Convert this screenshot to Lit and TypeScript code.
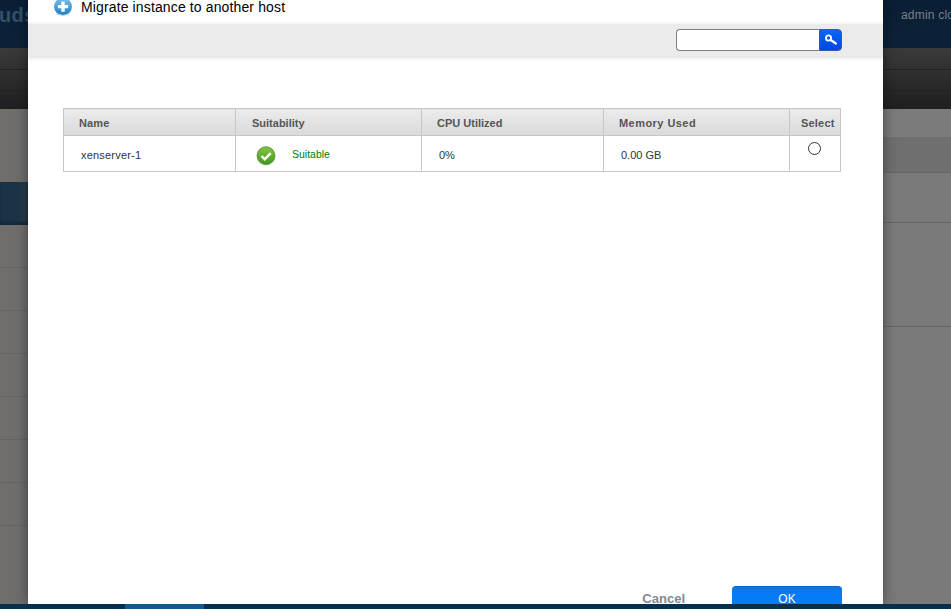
import { LitElement, html, css } from "lit";
import { customElement } from "lit/decorators.js";

@customElement("app-root")
export class AppRoot extends LitElement {
  static styles = css`
    :host { display: block; width: 951px; height: 609px; position: relative; overflow: hidden; font-family: "Liberation Sans", Arial, sans-serif; background: #757472; }
    .page { height: 609px; display: flex; flex-direction: column; }
    .top { height: 48px; flex: none; background: linear-gradient(#0a1f35, #0b2238); display: flex; justify-content: space-between; color: #7d7f82; overflow: hidden; }
    .brand { font-size: 20px; font-weight: bold; color: #34506a; margin-left: -1px; line-height: 30px; letter-spacing: .4px; }
    .user { font-size: 12px; line-height: 31px; white-space: nowrap; width: 50px; overflow: hidden; letter-spacing: .2px; }
    .nav { height: 61px; flex: none; background: linear-gradient(#3a3a3a, #1f1f1f); display: flex; flex-direction: column; padding-top: 1px; box-sizing: border-box; }
    .nav div { height: 20px; border-bottom: 1px solid #232323; }
    .content { flex: 1; display: flex; justify-content: space-between; }
    .side { width: 28px; background: #6f6e6b; padding-top: 73px; }
    .active { height: 43px; background: linear-gradient(90deg, #1b3346 0 60%, #2c4150); box-shadow: inset 0 -3px 3px #12283a; }
    .line { height: 42px; border-bottom: 1px solid #656462; }
    .right { width: 68px; background: #7a7a7a; }
    .r1 { height: 28px; background: #7b7b7b; }
    .r2 { height: 35px; background: #6f6f6f; border-bottom: 1px solid #676767; }
    .r3 { height: 49px; border-bottom: 1px solid #676767; }
    .r4 { height: 103px; border-bottom: 1px solid #676767; }
    .footer { height: 5px; flex: none; background: #06304d; position: relative; z-index: 2; display: flex; }
    .seg { width: 79px; margin-left: 125px; background: #125a8a; }

    .dialog { position: absolute; left: 28px; top: 0; width: 855px; height: 604px; background: #fff; box-shadow: 0 0 12px rgba(0,0,0,.45); display: flex; flex-direction: column; overflow: hidden; }
    .title { height: 24px; flex: none; display: flex; align-items: flex-start; font-size: 14px; color: #000; line-height: 14px; padding-left: 25px; letter-spacing: .13px; }
    .title svg { margin: -3px 8px 0 0; flex: none; }
    .bar { height: 32px; flex: none; background: #ebebeb; box-shadow: 0 2px 4px rgba(0,0,0,.12), 0 -1px 3px rgba(0,0,0,.06); display: flex; justify-content: flex-end; align-items: flex-start; padding: 5px 41px 0 0; box-sizing: border-box; position: relative; }
    .search { width: 143px; height: 22px; box-sizing: border-box; background: #fff; border: 1px solid #857c7f; border-right: none; border-radius: 4px 0 0 4px; }
    .go { width: 23px; height: 22px; box-sizing: border-box; background: linear-gradient(#0a66f8, #0046e6); border: 1px solid #3a5a9a; border-radius: 0 4px 4px 0; display: flex; align-items: center; justify-content: center; }
    table { border-collapse: collapse; margin: 52px 0 0 35px; width: 777px; table-layout: fixed; font-size: 11px; color: #333; }
    th, td { border: 1px solid #c6c6c6; padding: 0; text-align: left; }
    th { height: 27px; background: linear-gradient(#ececec, #d9d9d9); font-weight: bold; font-size: 11px; color: #555; padding: 2px 0 0 15px; box-sizing: border-box; }
    th.name { letter-spacing: .1px; }
    th.mem { letter-spacing: .45px; }
    th.suit-h { padding-left: 16px; }
    td { height: 36px; padding: 3px 0 0 17px; box-sizing: border-box; }
    td.host { letter-spacing: .2px; }
    th.sel { padding-left: 11px; letter-spacing: .2px; }
    td.suit-c { padding-top: 5px; }
    .cellflex { display: flex; align-items: center; padding-left: 3px; }
    .suit { color: #008000; font-size: 10.5px; margin: 0 0 4px 16px; }
    td.sel { padding: 0 0 11px 18px; }
    .radio { display: block; width: 13px; height: 13px; box-sizing: border-box; border: 1px solid #333; border-radius: 50%; background: #fff; }
    .spacer { flex: 1; }
    .actions { flex: none; display: flex; justify-content: flex-end; align-items: flex-start; height: 18px; padding-right: 41px; }
    .cancel { font-size: 13px; font-weight: bold; color: #7f8a96; margin: 5px 47px 0 0; line-height: 15px; }
    .ok { width: 110px; height: 30px; box-sizing: border-box; text-align: center; background: linear-gradient(#0a78f0, #0080ff); border-top: 1px solid #0a63c0; border-radius: 4px 4px 0 0; color: #fff; font-size: 12px; line-height: 24px; }
  `;

  render() {
    return html`
      <div class="page">
        <div class="top"><div class="brand">uds</div><div class="user">admin cloud</div></div>
        <div class="nav"><div></div><div></div></div>
        <div class="content">
          <div class="side">
            <div class="active"></div>
            ${[0, 1, 2, 3, 4, 5, 6].map(() => html`<div class="line"></div>`)}
          </div>
          <div class="right"><div class="r1"></div><div class="r2"></div><div class="r3"></div><div class="r4"></div></div>
        </div>
        <div class="footer"><div class="seg"></div></div>
      </div>
      <div class="dialog">
        <div class="title">
          <svg width="20" height="20" viewBox="0 0 20 20">
            <defs><linearGradient id="pl" x1="0" y1="0" x2="0" y2="1"><stop offset="0" stop-color="#7cc4ee"/><stop offset="1" stop-color="#1a7cc0"/></linearGradient></defs>
            <circle cx="10" cy="9.5" r="9" fill="url(#pl)"/>
            <path d="M3 17a10 4 0 0 0 14 0" fill="none" stroke="#d5d5d5" stroke-width="1"/>
            <path d="M8.3 4.5h3.4v3.4h3.4v3.4h-3.4v3.4H8.3v-3.4H4.9V7.9h3.4z" fill="#fff"/>
          </svg>
          <span>Migrate instance to another host</span>
        </div>
        <div class="bar">
          <div class="search"></div>
          <div class="go">
            <svg width="14" height="12" viewBox="0 0 14 12">
              <circle cx="4.5" cy="4" r="2.6" fill="none" stroke="#fff" stroke-width="1.8"/>
              <path d="M6.8 6l5 3.4" stroke="#fff" stroke-width="2.4" stroke-linecap="round"/>
            </svg>
          </div>
        </div>
        <table>
          <colgroup><col style="width:172px"/><col style="width:186px"/><col style="width:182px"/><col style="width:186px"/><col style="width:51px"/></colgroup>
          <thead><tr><th class="name">Name</th><th class="suit-h">Suitability</th><th>CPU Utilized</th><th class="mem">Memory Used</th><th class="sel">Select</th></tr></thead>
          <tbody><tr>
            <td class="host">xenserver-1</td>
            <td class="suit-c"><div class="cellflex">
              <svg width="20" height="20" viewBox="0 0 20 20">
                <defs><linearGradient id="ok" x1="0" y1="0" x2="0" y2="1"><stop offset="0" stop-color="#86c440"/><stop offset="1" stop-color="#3f9a1e"/></linearGradient></defs>
                <circle cx="10" cy="10" r="9.5" fill="#c4d8b0"/>
                <circle cx="10" cy="9.6" r="8.8" fill="url(#ok)" stroke="#4d8a22" stroke-width=".8"/>
                <path d="M5.5 10l3.2 3.2 6-6" fill="none" stroke="#fff" stroke-width="2.4"/>
              </svg>
              <span class="suit">Suitable</span>
            </div></td>
            <td>0%</td>
            <td>0.00 GB</td>
            <td class="sel"><span class="radio"></span></td>
          </tr></tbody>
        </table>
        <div class="spacer"></div>
        <div class="actions"><span class="cancel">Cancel</span><div class="ok">OK</div></div>
      </div>
    `;
  }
}
